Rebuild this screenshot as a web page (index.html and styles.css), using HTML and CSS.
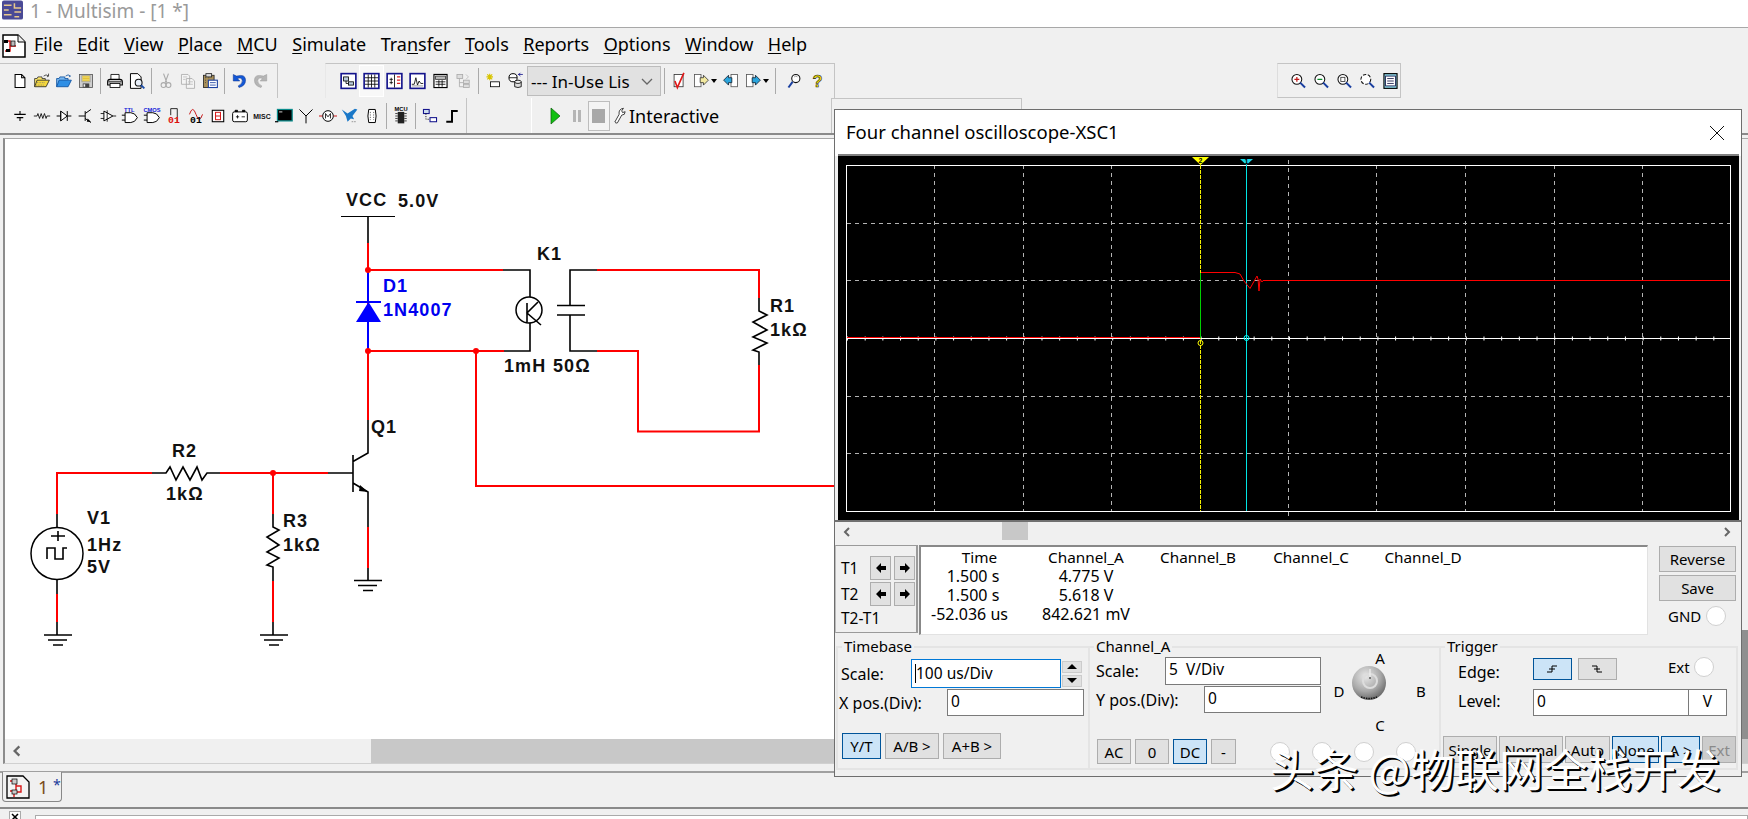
FILE: index.html
```html
<!DOCTYPE html>
<html lang="en">
<head>
<meta charset="utf-8">
<title>1 - Multisim - [1 *]</title>
<link rel="stylesheet" href="styles.css">
</head>
<body>
<svg class="defs" width="0" height="0" aria-hidden="true">
  <defs>
    <symbol id="i-new" viewBox="0 0 22 22"><path d="M5 3h8l4 4v12H5zM13 3v4h4" fill="#fff" stroke="#000" stroke-width="1.3"/></symbol>
    <symbol id="i-open" viewBox="0 0 22 22"><path d="M2 18V8h3l1-2h5v2h4v2" fill="#ffe96a" stroke="#333"/><path d="M2 18l3-8h15l-4 8z" fill="#f5d83c" stroke="#222"/><path d="M5 13h9M4 16h9" stroke="#777" stroke-dasharray="1 1"/><path d="M13 5q3-3 6 0l-2 1M19 5v-3" fill="none" stroke="#333"/></symbol>
    <symbol id="i-openb" viewBox="0 0 22 22"><path d="M2 18V8h3l1-2h6v2h4v2" fill="#79b8f0" stroke="#0b4f9e"/><path d="M2 18l3-8h15l-4 8z" fill="#2f8fe5" stroke="#0b4f9e"/><path d="M13 5q3-3 6 0l-2 1" fill="none" stroke="#0b4f9e"/></symbol>
    <symbol id="i-save" viewBox="0 0 22 22"><rect x="3" y="3" width="16" height="16" fill="#cfcfcf" stroke="#555"/><rect x="6" y="4" width="10" height="8" fill="#f1e070" stroke="#999"/><path d="M7 6h8M7 8h8M7 10h8" stroke="#e2b92a"/><rect x="7" y="14" width="8" height="5" fill="#444"/><rect x="8" y="15" width="2" height="3" fill="#eee"/></symbol>
    <symbol id="i-print" viewBox="0 0 22 22"><path d="M6 9V3h10v6" fill="#fff" stroke="#000"/><path d="M2 16v-4q0-3 3-3h12q3 0 3 3v4z" fill="#cfcfcf" stroke="#000" stroke-width="1.3"/><rect x="5" y="14" width="12" height="5" fill="#fff" stroke="#000"/><path d="M3 12h16" stroke="#000"/></symbol>
    <symbol id="i-prev" viewBox="0 0 22 22"><path d="M3 2h9l4 4v14H3z" fill="#fff" stroke="#000" stroke-width="1.2"/><circle cx="13" cy="13" r="4.2" fill="#e8f0fa" stroke="#111" stroke-width="1.3"/><path d="M16 16l4 4" stroke="#1a4ca8" stroke-width="2.2"/></symbol>
    <symbol id="i-cut" viewBox="0 0 22 22"><path d="M8 2l4 11M14 2l-4 11" stroke="#aaa" stroke-width="1.4"/><circle cx="8" cy="16" r="3" fill="none" stroke="#aaa" stroke-width="1.3"/><circle cx="14" cy="16" r="3" fill="none" stroke="#aaa" stroke-width="1.3"/></symbol>
    <symbol id="i-copy" viewBox="0 0 22 22"><path d="M3 3h8l2 2v10H3zM9 8h7l3 3v9H9z" fill="#f4f4f4" stroke="#aaa"/><path d="M5 6h5M5 9h3M11 12h6M11 15h6" stroke="#bbb"/></symbol>
    <symbol id="i-paste" viewBox="0 0 22 22"><rect x="3" y="4" width="13" height="15" fill="#a9905a" stroke="#222"/><rect x="6" y="2" width="7" height="4" fill="#dcdcdc" stroke="#222"/><path d="M5 7h2M9 7h2M5 10h2M5 13h2" stroke="#333" stroke-dasharray="1 1"/><rect x="9" y="10" width="11" height="9" fill="#fff" stroke="#1a3fa0" stroke-width="1.3"/><path d="M11 13h7M11 16h7" stroke="#1a3fa0"/></symbol>
    <symbol id="i-undo" viewBox="0 0 22 22"><path d="M4 3v8h8L9 8q5-2 6 2 1 4-5 7l1 2q8-2 8-9 0-8-11-5z" fill="#1458d6" stroke="#0b2f88" stroke-width=".6"/></symbol>
    <symbol id="i-redo" viewBox="0 0 22 22"><path d="M18 3v8h-8l3-3q-5-2-6 2-1 4 5 7l-1 2Q3 17 3 10q0-8 11-5z" fill="#b5b5b5" stroke="#999" stroke-width=".6"/></symbol>
    <symbol id="i-design" viewBox="0 0 22 22"><rect x="2" y="2" width="18" height="18" fill="#fff" stroke="#14148c" stroke-width="2"/><rect x="5" y="6" width="6" height="5" fill="#bcd" stroke="#000"/><rect x="11" y="12" width="6" height="4" fill="#bcd" stroke="#000"/><path d="M8 11v3h3" fill="none" stroke="#000"/></symbol>
    <symbol id="i-sheet" viewBox="0 0 22 22"><rect x="2" y="2" width="18" height="18" fill="#fff" stroke="#14148c" stroke-width="2"/><path d="M3 7h16M3 11h16M3 15h16M7 3v16M11 3v16M15 3v16" stroke="#000"/></symbol>
    <symbol id="i-split" viewBox="0 0 22 22"><rect x="2" y="2" width="18" height="18" fill="#fff" stroke="#14148c" stroke-width="2"/><path d="M11 3v16M7 7v8M5 9h4M5 13h4" stroke="#000"/><path d="M14 6h4M14 10h4M14 14h4" stroke="#d22" stroke-width="1.6"/></symbol>
    <symbol id="i-graph" viewBox="0 0 22 22"><rect x="2" y="2" width="18" height="18" fill="#fff" stroke="#14148c" stroke-width="2"/><path d="M4 15h3l2-8 2 9 2-5 2 3h3" fill="none" stroke="#000"/><path d="M4 17h14" stroke="#888"/></symbol>
    <symbol id="i-post" viewBox="0 0 22 22"><rect x="3" y="3" width="16" height="16" fill="#fff" stroke="#000" stroke-width="1.4"/><rect x="5" y="5" width="12" height="4" fill="#bbb" stroke="#333"/><path d="M5 12h12M5 15h12M9 10v8M13 10v8" stroke="#000"/></symbol>
    <symbol id="i-tree" viewBox="0 0 22 22"><rect x="3" y="3" width="7" height="5" fill="#ddd" stroke="#aaa"/><path d="M6 8v10h5M6 13h5" fill="none" stroke="#aaa"/><rect x="11" y="10" width="7" height="4" fill="#ddd" stroke="#aaa"/><rect x="11" y="15" width="7" height="4" fill="#ddd" stroke="#aaa"/><path d="M14 3l3 3-3 3" fill="none" stroke="#bbb"/></symbol>
    <symbol id="i-star" viewBox="0 0 22 22"><path d="M7 2v8M3 6h8M4 3l6 6M10 3l-6 6" stroke="#d8c400" stroke-width="1.4"/><rect x="8" y="12" width="11" height="6" fill="#fff" stroke="#000"/></symbol>
    <symbol id="i-db" viewBox="0 0 22 22"><circle cx="8" cy="7" r="5" fill="#fff" stroke="#000" stroke-width="1.2"/><path d="M3 7h10" stroke="#000"/><path d="M10 12v6q4 2 8 0v-6" fill="#ddd" stroke="#000"/><ellipse cx="14" cy="12" rx="4" ry="2" fill="#eee" stroke="#000"/><path d="M14 3h6M17 1l-2 2 2 2" fill="none" stroke="#14148c"/></symbol>
    <symbol id="i-check" viewBox="0 0 22 22"><rect x="5" y="3" width="11" height="15" fill="#fff" stroke="#333"/><path d="M6 11l3 8 8-18" fill="none" stroke="#e01818" stroke-width="2"/></symbol>
    <symbol id="i-send" viewBox="0 0 22 22"><rect x="3" y="3" width="8" height="15" fill="#fff" stroke="#555"/><path d="M10 7h4V4l6 6-6 6v-3h-4z" fill="#f2e9a0" stroke="#333"/></symbol>
    <symbol id="i-back" viewBox="0 0 22 22"><rect x="11" y="3" width="8" height="15" fill="#fff" stroke="#555"/><path d="M12 7H8V4l-6 6 6 6v-3h4z" fill="#2aa5dd" stroke="#123"/></symbol>
    <symbol id="i-sendb" viewBox="0 0 22 22"><rect x="3" y="3" width="8" height="15" fill="#fff" stroke="#555"/><path d="M10 7h4V4l6 6-6 6v-3h-4z" fill="#2aa5dd" stroke="#123"/></symbol>
    <symbol id="i-search" viewBox="0 0 22 22"><circle cx="12" cy="8" r="5" fill="#fff" stroke="#111" stroke-width="1.3"/><path d="M8 12l-5 7" stroke="#1a3fa0" stroke-width="2.4"/><path d="M10 6q2-2 4 0" fill="none" stroke="#888"/></symbol>
    <symbol id="i-help" viewBox="0 0 22 22"><text x="11" y="18" text-anchor="middle" class="svg-help">?</text></symbol>
    <symbol id="i-zin" viewBox="0 0 22 22"><circle cx="9" cy="9" r="6" fill="#fff" stroke="#111" stroke-width="1.3"/><path d="M6 9h6M9 6v6" stroke="#c01818" stroke-width="1.5"/><path d="M13 13l6 6" stroke="#1a3fa0" stroke-width="2.4"/></symbol>
    <symbol id="i-zout" viewBox="0 0 22 22"><circle cx="9" cy="9" r="6" fill="#fff" stroke="#111" stroke-width="1.3"/><path d="M6 9h6" stroke="#0b8a2a" stroke-width="1.6"/><path d="M13 13l6 6" stroke="#1a3fa0" stroke-width="2.4"/></symbol>
    <symbol id="i-zarea" viewBox="0 0 22 22"><circle cx="9" cy="9" r="6" fill="#fff" stroke="#111" stroke-width="1.3"/><rect x="6.500" y="6.500" width="5" height="5" fill="none" stroke="#333"/><path d="M13 13l6 6" stroke="#1a3fa0" stroke-width="2.4"/></symbol>
    <symbol id="i-zfit" viewBox="0 0 22 22"><circle cx="9" cy="9" r="6" fill="#fff" stroke="#111" stroke-width="1.300" stroke-dasharray="4 2"/><path d="M13 13l6 6" stroke="#1a3fa0" stroke-width="2.4"/></symbol>
    <symbol id="i-list" viewBox="0 0 22 22"><rect x="3" y="2" width="16" height="18" fill="#8fd7e8" stroke="#000" stroke-width="1.4"/><rect x="5" y="5" width="12" height="12" fill="#fff" stroke="#114"/><path d="M7 8h8M7 11h8M7 14h8" stroke="#114"/></symbol>
    <symbol id="c-source" viewBox="0 0 22 22"><path d="M11 5v4M4 9h14M7 13h8M11 13v4" stroke="#000" stroke-width="1.300" fill="none"/></symbol>
    <symbol id="c-res" viewBox="0 0 22 22"><path d="M1 11h4l1-3 2 6 2-6 2 6 2-6 2 6 1-3h4" fill="none" stroke="#000"/></symbol>
    <symbol id="c-diode" viewBox="0 0 22 22"><path d="M2 11h5M15 11h5M15 5v12" stroke="#000" stroke-width="1.2"/><path d="M7 5l8 6-8 6z" fill="#fff" stroke="#000" stroke-width="1.2"/><path d="M7 5v12" stroke="#000"/></symbol>
    <symbol id="c-tran" viewBox="0 0 22 22"><path d="M2 11h8M10 5v12M10 8l7-5M10 14l7 5" stroke="#000" stroke-width="1.2"/><path d="M13 14l4 4-5 0z" fill="#000"/></symbol>
    <symbol id="c-analog" viewBox="0 0 22 22"><path d="M6 5l11 6-11 6z" fill="#fff" stroke="#000" stroke-width="1.2"/><path d="M2 8h4M2 14h4M17 11h4M10 4v14" stroke="#000"/></symbol>
    <symbol id="c-ttl" viewBox="0 0 22 22"><text x="10" y="6" text-anchor="middle" class="svg-tiny svg-blue">TTL</text><path d="M1 10h4M1 16h4M5 7h7q5 0 8 6-3 6-8 6H5z" fill="#fff" stroke="#000" stroke-width="1.2"/></symbol>
    <symbol id="c-cmos" viewBox="0 0 22 22"><text x="11" y="6" text-anchor="middle" class="svg-tiny svg-blue">CMOS</text><path d="M1 10h4M1 16h4M5 7h7q5 0 8 6-3 6-8 6H5z" fill="#fff" stroke="#000" stroke-width="1.2"/></symbol>
    <symbol id="c-mcu01" viewBox="0 0 22 22"><path d="M7 2h8v16" fill="none" stroke="#000"/><path d="M7 2v8" stroke="#000"/><text x="11" y="20" text-anchor="middle" class="svg-num svg-red">01</text></symbol>
    <symbol id="c-mixed" viewBox="0 0 22 22"><path d="M3 9q4-12 8 0t8 0" fill="none" stroke="#c81818" stroke-width="1.2"/><text x="11" y="20" text-anchor="middle" class="svg-num">01</text></symbol>
    <symbol id="c-ind" viewBox="0 0 22 22"><rect x="4" y="4" width="14" height="14" fill="#fff" stroke="#000" stroke-width="1.3"/><rect x="8" y="6.500" width="6" height="9" fill="none" stroke="#d41414" stroke-width="1.200"/><path d="M8 11h6" stroke="#d41414" stroke-width="1.200"/></symbol>
    <symbol id="c-power" viewBox="0 0 22 22"><rect x="2" y="6" width="18" height="12" rx="2" fill="#fff" stroke="#000" stroke-width="1.2"/><path d="M5 6V4h3v2M14 6V4h3v2M6 12h4M8 10v4M13 12h4" stroke="#000"/></symbol>
    <symbol id="c-misc" viewBox="0 0 22 22"><text x="11" y="15" text-anchor="middle" class="svg-misc">MISC</text></symbol>
    <symbol id="c-term" viewBox="0 0 22 22"><rect x="3" y="3" width="18" height="14" fill="#000" stroke="#0a8c8c" stroke-width="1.500"/><path d="M5 6h4" stroke="#fff"/><path d="M0 18h4" stroke="#000" stroke-width="1.500"/></symbol>
    <symbol id="c-ant" viewBox="0 0 22 22"><path d="M11 11v9M3 3l8 8 8-8" fill="none" stroke="#000" stroke-width="1.2"/></symbol>
    <symbol id="c-motor" viewBox="0 0 22 22"><circle cx="11" cy="11" r="6.500" fill="#fff" stroke="#000" stroke-width="1.2"/><path d="M8 14V8l3 4 3-4v6" fill="none" stroke="#000"/><path d="M0 11h4M18 11h4" stroke="#c81818" stroke-width="1.4"/></symbol>
    <symbol id="c-ni" viewBox="0 0 22 22"><path d="M1 3l7 5 9-6 3 1-6 8 2 4-4-1-4 4-2-7z" fill="#1a78c8"/><path d="M13 18h2M16 18h2" stroke="#aaa" stroke-width="1.5"/></symbol>
    <symbol id="c-conn" viewBox="0 0 22 22"><path d="M7 3h8l1 8-1 8H7l-1-8z" fill="#fff" stroke="#000" stroke-width="1.200"/><path d="M9 6v10M13 6v10" stroke="#555" stroke-dasharray="1.500 1.500"/></symbol>
    <symbol id="c-mcu" viewBox="0 0 22 22"><rect x="7" y="6" width="8" height="14" fill="#222"/><path d="M4 8h18M4 11h18M4 14h18M4 17h18" stroke="#222" stroke-dasharray="3 8"/><text x="11" y="5" text-anchor="middle" class="svg-tiny">MCU</text></symbol>
    <symbol id="c-hier" viewBox="0 0 22 22"><rect x="3" y="3" width="7" height="5" fill="#cde" stroke="#14148c" stroke-width="1.300"/><rect x="11" y="13" width="8" height="5" fill="#fff" stroke="#14148c" stroke-width="1.300"/><path d="M6 8v7h5" fill="none" stroke="#000" stroke-dasharray="1.500 1.500"/></symbol>
    <symbol id="c-step" viewBox="0 0 22 22"><path d="M4 18h7V5h7" fill="none" stroke="#000" stroke-width="2.400"/></symbol>
    <symbol id="ar-l" viewBox="0 0 12 12"><path d="M1 6l5-5v3h5v4H6v3z" fill="#000"/></symbol>
    <symbol id="ar-r" viewBox="0 0 12 12"><path d="M11 6L6 1v3H1v4h5v3z" fill="#000"/></symbol>
    <symbol id="chev-l" viewBox="0 0 12 12"><path d="M8 2L4 6l4 4" fill="none" stroke="#666" stroke-width="2"/></symbol>
    <symbol id="chev-r" viewBox="0 0 12 12"><path d="M4 2l4 4-4 4" fill="none" stroke="#666" stroke-width="2"/></symbol>
  </defs>
</svg>

<header class="titlebar">
  <svg class="title-icon" viewBox="0 0 22 20"><rect width="22" height="20" rx="2" fill="#4a4a96"/><path d="M2 5h8M2 10h5M2 15h8M13 3v5h7M13 12h7M13 17h5" stroke="#e8c88c" stroke-width="1.6" fill="none"/></svg>
  <span class="title-text">1 - Multisim - [1 *]</span>
</header>

<nav class="menubar">
  <svg class="doc-icon" viewBox="0 0 24 24"><path d="M1 1h15l7 7v15H1z" fill="#fff" stroke="#000" stroke-width="1.500"/><path d="M16 1v7h7" fill="#eee" stroke="#000"/><path d="M3 7h5v10H3M8 12h6" fill="none" stroke="#d81818" stroke-width="1.500"/><rect x="2" y="6" width="4" height="3" fill="#000"/><rect x="4" y="15" width="4" height="3" fill="#000"/><rect x="9" y="7" width="4" height="5" fill="#bbb" stroke="#000" stroke-width=".7"/></svg>
  <ul class="menu">
    <li><u>F</u>ile</li><li><u>E</u>dit</li><li><u>V</u>iew</li><li><u>P</u>lace</li><li><u>M</u>CU</li><li><u>S</u>imulate</li><li>Tra<u>n</u>sfer</li><li><u>T</u>ools</li><li><u>R</u>eports</li><li><u>O</u>ptions</li><li><u>W</u>indow</li><li><u>H</u>elp</li>
  </ul>
</nav>

<div class="toolrow toolrow-top">
  <div class="tb tb-file">
    <svg class="ic"><use href="#i-new"/></svg><svg class="ic"><use href="#i-open"/></svg><svg class="ic"><use href="#i-openb"/></svg><svg class="ic"><use href="#i-save"/></svg>
    <i class="sep"></i>
    <svg class="ic"><use href="#i-print"/></svg><svg class="ic"><use href="#i-prev"/></svg>
    <i class="sep"></i>
    <svg class="ic"><use href="#i-cut"/></svg><svg class="ic"><use href="#i-copy"/></svg><svg class="ic"><use href="#i-paste"/></svg>
    <i class="sep"></i>
    <svg class="ic"><use href="#i-undo"/></svg><svg class="ic"><use href="#i-redo"/></svg>
  </div>
  <div class="tb tb-view">
    <svg class="ic wide"><use href="#i-design"/></svg><span class="pressed"><svg class="ic wide"><use href="#i-sheet"/></svg></span><svg class="ic wide"><use href="#i-split"/></svg><svg class="ic wide"><use href="#i-graph"/></svg><svg class="ic wide"><use href="#i-post"/></svg><svg class="ic wide"><use href="#i-tree"/></svg>
    <i class="sep"></i>
    <svg class="ic"><use href="#i-star"/></svg><svg class="ic wide"><use href="#i-db"/></svg>
    <div class="combo"><span>--- In-Use Lis</span><svg class="combo-arrow" viewBox="0 0 12 12"><path d="M1 4l5 5 5-5" fill="none" stroke="#666" stroke-width="1.300"/></svg></div>
    <i class="sep"></i>
    <svg class="ic"><use href="#i-check"/></svg><svg class="ic"><use href="#i-send"/></svg><b class="drop"></b><svg class="ic"><use href="#i-back"/></svg><svg class="ic"><use href="#i-sendb"/></svg><b class="drop"></b>
    <i class="sep sep-tail"></i>
    <svg class="ic"><use href="#i-search"/></svg><svg class="ic wide"><use href="#i-help"/></svg>
  </div>
  <div class="tb tb-zoom">
    <svg class="ic wide"><use href="#i-zin"/></svg><svg class="ic wide"><use href="#i-zout"/></svg><svg class="ic wide"><use href="#i-zarea"/></svg><svg class="ic wide"><use href="#i-zfit"/></svg><svg class="ic wide"><use href="#i-list"/></svg>
  </div>
</div>

<div class="toolrow toolrow-bottom">
  <div class="tb tb-parts">
    <svg class="ic"><use href="#c-source"/></svg><svg class="ic"><use href="#c-res"/></svg><svg class="ic"><use href="#c-diode"/></svg><svg class="ic"><use href="#c-tran"/></svg><svg class="ic"><use href="#c-analog"/></svg><svg class="ic"><use href="#c-ttl"/></svg><svg class="ic"><use href="#c-cmos"/></svg><svg class="ic"><use href="#c-mcu01"/></svg><svg class="ic"><use href="#c-mixed"/></svg><svg class="ic"><use href="#c-ind"/></svg><svg class="ic"><use href="#c-power"/></svg><svg class="ic"><use href="#c-misc"/></svg><svg class="ic"><use href="#c-term"/></svg><svg class="ic"><use href="#c-ant"/></svg><svg class="ic"><use href="#c-motor"/></svg><svg class="ic"><use href="#c-ni"/></svg><svg class="ic"><use href="#c-conn"/></svg>
    <i class="sep"></i>
    <svg class="ic"><use href="#c-mcu"/></svg>
    <i class="sep"></i>
    <svg class="ic"><use href="#c-hier"/></svg><svg class="ic"><use href="#c-step"/></svg>
  </div>
  <div class="tb tb-sim">
    <svg class="sim-ic" viewBox="0 0 20 20"><path d="M6 2l9 8-9 8z" fill="#12c012" stroke="#0a5a0a" stroke-width=".7"/></svg>
    <svg class="sim-ic" viewBox="0 0 20 20"><path d="M6 4h3v12H6zM11 4h3v12h-3z" fill="#b5b5b5"/></svg>
    <span class="stop-box"><svg class="sim-ic" viewBox="0 0 20 20"><rect x="3" y="3" width="13" height="14" fill="#a8a8a8"/></svg></span>
    <svg class="wrench" viewBox="0 0 14 20"><path d="M11 1l-2 3 1 2 3-1q0 4-4 4L4 18q-2 1-3-1l5-9q-1-6 5-7z" fill="#fff" stroke="#222"/></svg>
    <span class="sim-label">Interactive</span>
  </div>
  <div class="tb tb-extra"></div>
</div>

<main class="workspace">
  <div class="canvas">
    <svg class="circuit" viewBox="5 139 1737 600" width="1737" height="600" role="img" aria-label="Relay driver circuit">
      <g class="wire-red">
        <path d="M368 243V351H504M368 270H503M597 270H759V298M759 365V431.500H638V351H597"/>
        <path d="M476 351V486H834M368 351V420"/>
        <path d="M57 514V473H152M220 473H328M273 473V514M273 581V622M57 594V622M368 527V568"/>
      </g>
      <g class="wire-blue"><path d="M368 271V302M368 322V350"/></g>
      <path class="diode-body" d="M356 322L368.500 302L381 322Z"/>
      <path class="diode-bar" d="M356 302H381"/>
      <g class="wire-black">
        <path d="M341 216.500H395" class="thin"/>
        <path d="M368 216V243M368 420V453L353 461.500M353 455V492M353 473H328M353 483L368 492V527M368 568V580"/>
        <path d="M152 473H166L170 467L176 480L183 467L190 480L197 467L202 480L207 473H220"/>
        <path d="M273 514V527L279 530L267 537L279 545L267 552L279 558L267 565L273 567V581"/>
        <path d="M759 298V311L767 315L753 322L767 330L753 337L767 343L753 350L759 352V365"/>
        <path d="M503 270H530V297M530 323V351H504"/>
        <path d="M597 270H570V305M557 305.500H585M557 315H585M570 315V351H597"/>
        <path d="M57 514V527M57 580V594M57 622V635M273 622V635M44 635H72M48 640H67M53 645H63M260 635H288M264 640H283M269 645H279M354 580.500H382M358 585.500H377M363 590.500H373"/>
        <path d="M51 536H65M58 531V541M47 559V548H55V559H63V548H67" />
        <path d="M527 303V322M538 302L527 313L541 325"/>
      </g>
      <circle class="part" cx="57" cy="553.500" r="26"/>
      <circle class="part" cx="529" cy="310" r="13"/>
      <path d="M360 485L368 492L359 491Z" class="fill-black"/>
      <g class="node"><circle cx="368" cy="270" r="3"/><circle cx="368" cy="351" r="3"/><circle cx="476" cy="351" r="3"/><circle cx="273" cy="473" r="3"/></g>
      <g class="labels">
        <text x="346" y="206">VCC</text><text x="398" y="207">5.0V</text>
        <text x="383" y="292" class="blue">D1</text><text x="383" y="316" class="blue">1N4007</text>
        <text x="371" y="433">Q1</text><text x="172" y="457">R2</text><text x="166" y="500">1kΩ</text>
        <text x="87" y="524">V1</text><text x="87" y="551">1Hz</text><text x="87" y="573">5V</text>
        <text x="283" y="527">R3</text><text x="283" y="551">1kΩ</text>
        <text x="537" y="260">K1</text><text x="504" y="372">1mH</text><text x="553" y="372">50Ω</text>
        <text x="770" y="312">R1</text><text x="770" y="336">1kΩ</text>
      </g>
    </svg>
    <div class="vscroll"><div class="vthumb"></div></div>
  </div>
  <div class="hscroll">
    <svg class="hs-arrow"><use href="#chev-l"/></svg>
    <div class="hthumb"></div>
  </div>
</main>

<div class="tabstrip">
  <div class="tab">
    <svg class="tab-icon" viewBox="0 0 24 24"><path d="M1 1h16l6 6v16H1z" fill="#f4f4f4" stroke="#000" stroke-width="1.300"/><path d="M4 6h6v10H4M10 11h5v6H8v5" fill="none" stroke="#d81818" stroke-width="1.400"/><rect x="6" y="4" width="5" height="5" fill="#ccc" stroke="#000" stroke-width=".7"/><rect x="6" y="15" width="5" height="4" fill="#ccc" stroke="#000" stroke-width=".7"/></svg>
    <span>1 <em>*</em></span>
  </div>
</div>
<footer class="statusbar">
  <span class="close-box"><svg viewBox="0 0 10 10"><path d="M2 2l6 6M8 2l-6 6" stroke="#000" stroke-width="1.500"/></svg></span>
  <div class="status-input"></div>
</footer>

<section class="scope-window" aria-label="Four channel oscilloscope-XSC1">
  <div class="sw-title">
    <span>Four channel oscilloscope-XSC1</span>
    <svg class="sw-close" viewBox="0 0 16 16"><path d="M1 1l14 14M15 1L1 15" stroke="#111" stroke-width="1"/></svg>
  </div>
  <svg class="screen" viewBox="838 156 901 364" width="901" height="364" role="img" aria-label="Oscilloscope trace">
    <rect x="838" y="156" width="901" height="364" fill="#000"/>
    <g class="grid">
      <path d="M934.500 165V511M1023.500 165V511M1111.500 165V511M1288.500 160V516M1376.500 165V511M1465.500 165V511M1554.500 165V511M1642.500 165V511"/>
      <path d="M847 223.500H1730M847 280.500H1730M847 396.500H1730M847 453.500H1730"/>
    </g>
    <rect class="frame" x="846.500" y="165.500" width="884" height="346"/>
    <path class="axis" d="M847 338.500H1730"/>
    <path class="axis-ticks" d="M847 338.500H1730"/>
    <path class="tr-red" d="M847 337.500H1200"/>
    <path class="tr-yel" d="M1200.500 165V511"/>
    <path class="tr-cy" d="M1246.500 165V511"/>
    <path class="tr-grn" d="M1200.500 273V338"/>
    <path class="tr-red thin-red" d="M1201 272.500H1235L1240 274L1244 281L1250 288.500L1257 276L1258 279L1259 291L1260 279L1262 282L1263 280.500H1730"/>
    <path class="tri-yel" d="M1192 157H1209L1200.500 165Z"/>
    <path class="tri-cy" d="M1240 159H1253L1246.500 165Z"/>
    <text x="1200.500" y="163" class="tri-num">2</text>
    <text x="1246.500" y="164" class="tri-num">1</text>
    <circle cx="1200.500" cy="343" r="2.500" class="mark-yel"/>
    <circle cx="1246.500" cy="338" r="2.500" class="mark-cy"/>
  </svg>
  <div class="sw-scroll">
    <svg class="sw-arrow"><use href="#chev-l"/></svg>
    <div class="sw-thumb"></div>
    <svg class="sw-arrow sw-arrow-r"><use href="#chev-r"/></svg>
  </div>

  <div class="cursor-row">
    <div class="t-panel">
      <span class="t-label">T1</span><button class="t-btn"><svg><use href="#ar-l"/></svg></button><button class="t-btn"><svg><use href="#ar-r"/></svg></button>
      <span class="t-label">T2</span><button class="t-btn"><svg><use href="#ar-l"/></svg></button><button class="t-btn"><svg><use href="#ar-r"/></svg></button>
      <span class="t-label t-diff">T2-T1</span>
    </div>
    <div class="readout">
      <span class="rh">Time</span><span class="rh">Channel_A</span><span class="rh">Channel_B</span><span class="rh">Channel_C</span><span class="rh">Channel_D</span>
      <span class="shift-1">1.500 s</span><span>4.775 V</span><span></span><span></span><span></span>
      <span class="shift-1">1.500 s</span><span>5.618 V</span><span></span><span></span><span></span>
      <span class="shift-2">-52.036 us</span><span>842.621 mV</span><span></span><span></span><span></span>
    </div>
    <div class="side">
      <button class="btn side-btn">Reverse</button>
      <button class="btn side-btn">Save</button>
      <div class="gnd"><span>GND</span><i class="term"></i></div>
    </div>
  </div>

  <div class="controls">
    <div class="group g-time">
      <span class="legend">Timebase</span>
      <div class="row r-scale">
        <label class="lab lab-70">Scale:</label>
        <div class="field f-150 focus"><i class="caret"></i>100 us/Div</div>
        <div class="spin"><span class="spin-b"><b class="tri-up"></b></span><span class="spin-b"><b class="tri-dn"></b></span></div>
      </div>
      <div class="row r-pos">
        <label class="lab lab-108">X pos.(Div):</label>
        <div class="field f-137">0</div>
      </div>
      <div class="row r-btn">
        <button class="btn on b-39">Y/T</button><button class="btn b-54">A/B &gt;</button><button class="btn b-58">A+B &gt;</button>
      </div>
    </div>

    <div class="group g-chan">
      <span class="legend">Channel_A</span>
      <div class="chan-top">
        <div class="chan-left">
          <div class="row r-scale2">
            <label class="lab lab-69">Scale:</label>
            <div class="field f-156">5&nbsp; V/Div</div>
          </div>
          <div class="row">
            <label class="lab lab-108">Y pos.(Div):</label>
            <div class="field f-117">0</div>
          </div>
        </div>
        <div class="selector">
          <span class="sel-a">A</span>
          <span class="sel-d">D</span>
          <svg class="knob" viewBox="0 0 34 34"><defs><radialGradient id="kn" cx=".4" cy=".3" r=".8"><stop offset="0" stop-color="#e8e8e8"/><stop offset=".55" stop-color="#a8a8a8"/><stop offset="1" stop-color="#555"/></radialGradient></defs><circle cx="17" cy="17" r="17" fill="url(#kn)"/><circle cx="18" cy="15" r="7" fill="none" stroke="#ddd" stroke-width="2"/><path d="M18 3v8" stroke="#eee" stroke-width="1.300"/><path d="M17 12h2" stroke="#222"/><path d="M9 31q8 3 16 0" fill="none" stroke="#111" stroke-width="1.500" stroke-dasharray="1.500 1"/></svg>
          <span class="sel-b">B</span>
          <span class="sel-c">C</span>
        </div>
      </div>
      <div class="row r-btn2">
        <button class="btn b-34">AC</button><button class="btn b-34">0</button><button class="btn on b-34">DC</button><button class="btn b-25">-</button>
        <div class="terms"><i class="term"></i><i class="term"></i><i class="term"></i><i class="term"></i></div>
      </div>
    </div>

    <div class="group g-trig">
      <span class="legend">Trigger</span>
      <div class="row r-edge">
        <label class="lab lab-75 lab-down">Edge:</label>
        <button class="btn on b-39 b-22"><svg viewBox="0 0 16 12" class="edge"><path d="M2 9h5V3h5M4 6h6" fill="none" stroke="#000"/></svg></button>
        <button class="btn b-39 b-22"><svg viewBox="0 0 16 12" class="edge"><path d="M2 3h5v6h5M4 6h6" fill="none" stroke="#000"/></svg></button>
        <span class="ext"><span>Ext</span><i class="term"></i></span>
      </div>
      <div class="row r-level">
        <label class="lab lab-75 lab-up">Level:</label>
        <div class="field f-156">0</div>
        <div class="field f-38 f-v">V</div>
      </div>
      <div class="row r-btn3">
        <button class="btn b-54 b-27">Single</button><button class="btn b-64 b-27">Normal</button><button class="btn b-45 b-27">Auto</button><button class="btn on b-47 b-27">None</button><button class="btn on b-39 b-27">A &gt;</button><button class="btn off b-34 b-27">Ext</button>
      </div>
    </div>
  </div>
</section>

<div class="watermark">头条 @物联网全栈开发</div>
</body>
</html>
```
FILE: styles.css
```css
* { box-sizing: border-box; }
html, body { margin: 0; padding: 0; }
body {
  width: 1748px; height: 819px; overflow: hidden; position: relative;
  background: #f0f0f0; color: #000;
  font-family: "Noto Sans", "Open Sans", sans-serif; font-size: 15px;
}
.defs { position: absolute; }
.svg-help { font: bold 20px "Liberation Sans", sans-serif; fill: #f0dc00; stroke: #222; stroke-width: .7px; }
.svg-tiny { font: bold 7px "Liberation Sans", sans-serif; }
.svg-blue { fill: #1420d8; }
.svg-num { font: bold 12px "Liberation Mono", monospace; fill: #000; }
.svg-red { fill: #e01010; }
.svg-misc { font: bold 8.5px "Liberation Sans", sans-serif; fill: #111; }

.titlebar { height: 28px; background: #fff; border-bottom: 1px solid #a8a8a8; display: flex; align-items: flex-start; padding-left: 2px; }
.title-icon { width: 21px; height: 20px; margin-right: 7px; }
.title-text { font-size: 19px; line-height: 22px; color: #9a9a9a; }

.menubar { height: 35px; display: flex; align-items: center; padding-left: 2px; }
.doc-icon { width: 24px; height: 24px; margin-right: 8px; }
.menu { list-style: none; display: flex; gap: 14.5px; margin: 0; padding: 0 0 4px; font-size: 18px; line-height: 24px; }
.menu u { text-underline-offset: 2px; }

.toolrow { display: flex; align-items: stretch; }
.toolrow-top { height: 35px; }
.toolrow-bottom { height: 37px; border-bottom: 2px solid #8a8a8a; }
.tb { display: flex; align-items: center; border-top: 1px solid #c4c4c4; border-right: 1px solid #c4c4c4; }
.tb-file { width: 278px; padding-left: 9px; border-left: 0; }
.tb-view { width: 510px; margin-left: 47px; padding-left: 11px; border-left: 1px solid #e8e8e8; border-top-color: #c4c4c4; }
.tb-zoom { width: 124px; margin-left: 442px; padding-left: 9px; border-left: 1px solid #ddd; border-bottom: 1px solid #c4c4c4; }
.tb-parts { width: 467px; padding-left: 9px; border-top: 0; }
.tb-sim { width: 301px; margin-left: 64px; padding-left: 13px; border-left: 1px solid #fff; border-top: 0; }
.tb-extra { width: 190px; }

.ic { width: 22px; height: 22px; flex: none; padding: 2px; }
.ic.wide { width: 23px; padding: 2px 2.5px; }
.sep { width: 1px; height: 26px; background: #aaa; margin: 0 3px; flex: none; }
.sep-tail { margin-right: 8px; }
.pressed { display: flex; align-items: center; height: 30px; background: #f8f8f8; outline: 1px solid #fff; }
.drop { width: 0; height: 0; border: 3px solid transparent; border-top: 4px solid #000; border-bottom: 0; margin: 0 3px 0 -1px; flex: none; }

.combo { width: 134px; height: 30px; background: #e1e1e1; border: 1px solid #bcbcbc; display: flex; align-items: center; padding-left: 3px; font-size: 17px; overflow: hidden; flex: none; }
.combo span { flex: 1; white-space: nowrap; overflow: hidden; }
.combo-arrow { width: 12px; height: 12px; margin: 0 7px 0 2px; flex: none; }

.sim-ic { width: 20px; height: 20px; flex: none; }
.sim-ic + .sim-ic { margin-left: 2px; }
.stop-box { display: flex; align-items: center; justify-content: center; width: 22px; height: 30px; margin-left: 1px; background: #f4f4f4; border: 1px solid #bdbdbd; }
.wrench { width: 12px; height: 18px; margin-left: 4px; }
.sim-label { font-size: 18px; margin-left: 3px; white-space: nowrap; }

.canvas { margin-top: 3px; height: 601px; margin-left: 3px; border-left: 2px solid #8c8c8c; border-top: 1px solid #a8a8a8; background: #fff; display: flex; }
.circuit { display: block; flex: none; }
.vscroll { flex: none; width: 6px; background: #f0f0f0; }
.vthumb { margin-top: 491px; height: 109px; background: #8f8f8f; }
.hscroll { height: 25px; margin-left: 3px; border-left: 2px solid #8c8c8c; border-bottom: 1px solid #d0d0d0; display: flex; }
.hs-arrow { width: 14px; height: 14px; margin: 5px 0 0 5px; flex: none; }
.hthumb { margin-left: 347px; flex: 1; height: 24px; background: #c8c8c8; }

.wire-red path { fill: none; stroke: #f00; stroke-width: 2; }
.wire-blue path { fill: none; stroke: #00f; stroke-width: 2; }
.diode-body { fill: #00f; }
.diode-bar { fill: none; stroke: #00f; stroke-width: 2; }
.wire-black path { fill: none; stroke: #000; stroke-width: 1.6; }
.wire-black .thin { stroke-width: 1; }
.part { fill: none; stroke: #000; stroke-width: 1.5; }
.fill-black { fill: #000; }
.node circle { fill: #f00; }
.labels text { font: bold 18px "Liberation Sans", Arial, sans-serif; letter-spacing: 1.1px; fill: #111; }
.labels .blue { fill: #0000f0; }

.tabstrip { height: 38px; margin-top: 7px; border-top: 2px solid #a0a0a0; border-bottom: 2px solid #8a8a8a; padding-left: 2px; }
.tab { width: 60px; height: 30px; margin-top: -1px; border: 1px solid #888; border-top: 0; border-radius: 0 0 4px 4px; display: flex; align-items: center; gap: 8px; padding-left: 3px; background: #f0f0f0; font-size: 18px; }
.tab-icon { width: 24px; height: 24px; flex: none; }
.tab span { color: #7a4a1a; }
.tab em { font-style: normal; color: #1a3a9a; font-size: 14px; vertical-align: 4px; }

.statusbar { display: flex; padding: 2px 0 0 9px; gap: 14px; height: 10px; }
.close-box { width: 12px; height: 16px; border: 1px solid #aaa; background: #fff; flex: none; display: block; }
.close-box svg { display: block; width: 10px; height: 10px; }
.status-input { flex: 1; margin-top: 4px; border: 1px solid #aaa; background: #fff; height: 16px; }

/* floating instrument window */
.scope-window { position: absolute; left: 834px; top: 109px; width: 908px; height: 668px; border: 1px solid #6e6e6e; background: #f0f0f0; display: flex; flex-direction: column; }
.sw-title { flex: none; height: 46px; background: #fff; display: flex; align-items: center; justify-content: space-between; padding: 0 16px 4px 11px; font-size: 18.5px; }
.sw-close { width: 16px; height: 16px; margin-top: 4px; }
.screen { flex: none; display: block; margin: 0 3px; height: 364px; box-shadow: 0 -2px 0 #808080; }
.grid path { fill: none; stroke: #b4b4b4; stroke-width: 1; stroke-dasharray: 4 4; }
.frame { fill: none; stroke: #fff; stroke-width: 1; }
.axis { fill: none; stroke: #fff; stroke-width: 1; }
.axis-ticks { fill: none; stroke: #fff; stroke-width: 4; stroke-dasharray: 1 16.68; }
.tr-red { fill: none; stroke: #f00; stroke-width: 1; }
.thin-red { stroke-width: 1; }
.tr-yel { fill: none; stroke: #f2f000; stroke-width: 1; stroke-dasharray: 4 1; }
.tr-cy { fill: none; stroke: #00e5e5; stroke-width: 1; }
.tr-grn { fill: none; stroke: #00d000; stroke-width: 1; }
.tri-yel { fill: #ff0; }
.tri-cy { fill: #18d8e8; }
.tri-num { font: bold 7px "Liberation Sans", sans-serif; text-anchor: middle; fill: #000; }
.mark-yel { fill: none; stroke: #ff0; }
.mark-cy { fill: none; stroke: #0ff; }

.sw-scroll { flex: none; height: 25px; border-top: 2px solid #707070; display: flex; align-items: flex-start; }
.sw-arrow { width: 12px; height: 12px; margin: 4px 0 0 6px; flex: none; }
.sw-thumb { width: 26px; height: 18px; margin-left: 149px; background: #c8c8c8; }
.sw-arrow-r { margin-left: 693px; }

.cursor-row { flex: none; height: 90px; display: flex; }
.t-panel { width: 83px; height: 88px; border: 1px solid #9a9a9a; border-left: 1px solid #bbb; border-right-width: 2px; display: grid; grid-template-columns: 26px 21px 21px; grid-auto-rows: 24px; column-gap: 3px; row-gap: 2px; align-items: center; padding: 10px 0 0 5px; }
.t-label { font-size: 15.5px; }
.t-diff { grid-column: 1 / 4; white-space: nowrap; margin-top: -5px; }
.t-btn { width: 21px; height: 24px; padding: 0; background: #e1e1e1; border: 1px solid #adadad; display: flex; align-items: center; justify-content: center; }
.t-btn svg { width: 12px; height: 12px; }
.readout { margin-left: 1px; width: 729px; height: 90px; background: #fff; border: 1px solid #e2e2e2; border-top: 2px solid #888; border-left: 2px solid #888; display: grid; grid-template-columns: 117px 96px 128px 98px 126px; grid-auto-rows: 19px; padding-top: 1px; line-height: 19px; text-align: center; font-size: 16px; white-space: nowrap; align-content: start; }
.rh { font-size: 15.3px; }
.shift-1 { padding-right: 13px; }
.shift-2 { padding-right: 20px; }
.side { margin-left: 11px; width: 77px; display: flex; flex-direction: column; gap: 3px; padding-top: 1px; }
.side-btn { height: 26px; width: 77px; }
.gnd { display: flex; align-items: center; padding-left: 9px; margin-top: 2px; gap: 5px; }

.btn { font: inherit; font-size: 15px; padding: 0; background: #e1e1e1; border: 1px solid #adadad; color: #000; flex: none; white-space: nowrap; }
.btn.on { background: #cce4f7; border-color: #005499; }
.btn.off { background: #ccc; color: #8a8a8a; }
.term { display: block; width: 20px; height: 20px; border-radius: 50%; background: #fff; border: 1px solid #d0d0d0; flex: none; }

.controls { flex: 1; display: flex; padding: 11px 3px 5px 1px; }
.group { position: relative; height: 124px; border: 2px solid #e4e4e4; flex: none; }
.g-time { width: 252px; padding: 11px 0 0 3px; border-right: 0; }
.g-chan { width: 351px; padding: 0 0 0 6px; border-right: 0; }
.g-trig { width: 299px; padding: 10px 0 0 17px; }
.legend { position: absolute; left: 4px; top: -12px; padding: 0 2px; background: #f0f0f0; line-height: 20px; }
.row { display: flex; align-items: center; }
.lab { flex: none; white-space: nowrap; font-size: 16px; }
.lab-70 { width: 70px; }
.lab-69 { width: 69px; }
.lab-75 { width: 75px; }
.lab-108 { width: 108px; }
.lab-down { margin-top: 5px; }
.lab-up { margin-top: -4px; }
.field { height: 27px; background: #fff; border: 1px solid #7a7a7a; padding-left: 3px; line-height: 23px; flex: none; white-space: nowrap; font-size: 15.5px; }
.focus { border-color: #0078d7; height: 29px; line-height: 25px; display: flex; align-items: center; }
.caret { display: block; width: 1px; height: 19px; background: #000; }
.f-150 { width: 150px; }
.f-137 { width: 137px; }
.f-156 { width: 156px; }
.f-117 { width: 117px; }
.f-38 { width: 38px; border-left: 0; text-align: center; }
.f-v { padding-left: 0; }
.spin { display: flex; flex-direction: column; gap: 2px; margin-left: 1px; }
.spin-b { width: 20px; height: 12px; background: #e1e1e1; border: 1px solid #ccc; display: flex; align-items: center; justify-content: center; }
.tri-up, .tri-dn { width: 0; height: 0; border: 5px solid transparent; }
.tri-up { border-bottom: 5px solid #000; border-top: 0; }
.tri-dn { border-top: 5px solid #000; border-bottom: 0; }
.r-pos { margin: 1px 0 0 -2px; }
.r-btn { gap: 4px; margin: 17px 0 0 1px; }
.b-22 { height: 22px; }
.b-25 { width: 25px; height: 25px; }
.b-27 { height: 27px; }
.b-34 { width: 34px; height: 25px; }
.b-39 { width: 39px; height: 26px; }
.b-45 { width: 45px; }
.b-47 { width: 47px; }
.b-54 { width: 54px; height: 26px; }
.b-58 { width: 58px; height: 26px; }
.b-64 { width: 64px; }
.b-34.b-27, .b-39.b-27, .b-54.b-27 { height: 27px; }
.b-39.b-22 { height: 22px; margin-right: 6px; }

.chan-top { display: flex; height: 89px; }
.chan-left { padding-top: 9px; display: flex; flex-direction: column; gap: 1px; }
.r-scale2 .field { height: 28px; }
.selector { width: 102px; margin: 2px 0 0 8px; display: grid; grid-template-columns: 20px 62px 20px; grid-template-rows: 16px 49px 20px; justify-items: center; align-items: center; }
.sel-a { grid-area: 1 / 2; }
.sel-d { grid-area: 2 / 1; }
.knob { grid-area: 2 / 2; width: 34px; height: 34px; justify-self: start; align-self: start; margin-left: 3px; }
.sel-b { grid-area: 2 / 3; }
.sel-c { grid-area: 3 / 2; }
.r-btn2 { gap: 4px; margin-left: 1px; margin-top: 2px; }
.terms { display: flex; gap: 22px; margin-left: 30px; }

.r-edge { height: 22px; }
.ext { display: flex; align-items: center; gap: 4px; margin: -5px 0 0 45px; }
.edge { width: 16px; height: 12px; }
.r-level { margin-top: 9px; }
.r-btn3 { gap: 2px; margin: 20px 0 0 -15px; }

.watermark { position: absolute; left: 1270px; top: 738px; font-family: "Noto Sans CJK SC", sans-serif; font-size: 44.3px; line-height: 60px; color: #fff; text-shadow: 2px 2px 0 #000, 1px 1px 0 #000; white-space: nowrap; }
```
